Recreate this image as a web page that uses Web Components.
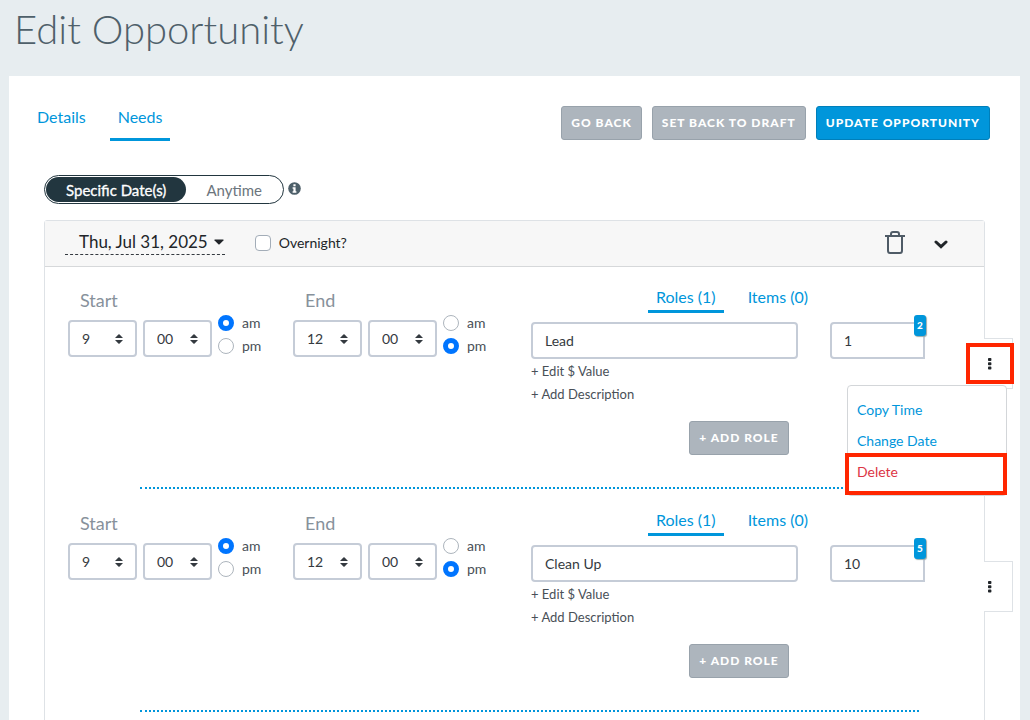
<!DOCTYPE html>
<html lang="en">
<head>
<meta charset="utf-8">
<meta name="viewport" content="width=device-width, initial-scale=1">
<title>Edit Opportunity</title>
<style>
  :root {
    --blue: #0096db;
    --line: #dee2e6;
    --field: #c5ccd7;
    --ink: #212529;
    --slate: #495057;
  }
  body {
    margin: 0;
    min-height: 100vh;
    background: #e7edf0;
    color: var(--ink);
    font: 14px/20px Lato, "Liberation Sans", sans-serif;
  }
</style>
</head>
<body>
<opportunity-page heading="Edit Opportunity">
  <tab-link slot="tabs" href="#details">Details</tab-link>
  <tab-link slot="tabs" href="#needs" active>Needs</tab-link>
  <action-button slot="actions">Go Back</action-button>
  <action-button slot="actions">Set Back to Draft</action-button>
  <action-button slot="actions" primary>Update Opportunity</action-button>
  <schedule-toggle></schedule-toggle>
  <date-card date="Thu, Jul 31, 2025">
    <need-row role-name="Lead" quantity="1" badge="2" menu-open></need-row>
    <need-row role-name="Clean Up" quantity="10" badge="5"></need-row>
  </date-card>
</opportunity-page>

<script>
const reset = `
  *, *::before, *::after { box-sizing: border-box; }
  button, input, select { font: inherit; color: inherit; margin: 0; }
  button { background: none; border: 0; padding: 0; cursor: pointer; }
  a { text-decoration: none; color: inherit; }
  svg { display: block; }
`;

class BaseElement extends HTMLElement {
  connectedCallback() {
    if (this.shadowRoot) return;
    this.attachShadow({ mode: "open" }).innerHTML = this.render();
  }
}

customElements.define("opportunity-page", class extends BaseElement {
  render() {
    return `<style>${reset}
      :host { display: block; }
      h1 { margin: 0; padding: 3px 14px 21px; font-size: 40px; line-height: 52px; font-weight: 300; color: #4f606a; }
      main { background: #fff; margin: 0 10px 0 9px; padding: 30px 35px 40px; }
      .bar { display: flex; justify-content: space-between; align-items: flex-start; margin: 0 -5px 34px -15px; }
      nav { display: flex; gap: 16px; font-size: 16px; --tab-line: 22px; --tab-gap: 10px; }
      .actions { display: flex; gap: 10px; }
    </style>
    <h1>${this.getAttribute("heading")}</h1>
    <main>
      <div class="bar">
        <nav><slot name="tabs"></slot></nav>
        <div class="actions"><slot name="actions"></slot></div>
      </div>
      <slot></slot>
    </main>`;
  }
});

customElements.define("tab-link", class extends BaseElement {
  render() {
    return `<style>${reset}
      :host { display: block; }
      a { display: block; padding: 0 8px var(--tab-gap, 2px); line-height: var(--tab-line, 22px); color: var(--blue); border-bottom: 3px solid transparent; }
      :host([active]) a { border-color: var(--blue); }
    </style>
    <a href="${this.getAttribute("href")}"><slot></slot></a>`;
  }
});

customElements.define("action-button", class extends BaseElement {
  render() {
    return `<style>${reset}
      :host { display: block; }
      button { display: block; height: 34px; padding: 0 9px; border: 1px solid #98a2ab; border-radius: 3px; background: #adb5bd; color: #fff; font-size: 12px; font-weight: 900; letter-spacing: 1px; text-transform: uppercase; white-space: nowrap; }
      :host([primary]) button { background: var(--blue); border-color: #007fba; }
    </style>
    <button type="button"><slot></slot></button>`;
  }
});

customElements.define("schedule-toggle", class extends BaseElement {
  render() {
    return `<style>${reset}
      :host { display: flex; align-items: center; gap: 4px; margin-bottom: 16px; }
      .pill { display: flex; padding: 1px; border: 1px solid #22363f; border-radius: 15px; }
      .pill button { height: 25px; padding: 0 20px; border-radius: 13px; font-size: 15px; color: #6c757d; }
      .pill button[aria-pressed=true] { background: #22363f; color: #fff; -webkit-text-stroke: 0.3px #fff; }
      .info { margin-bottom: 2px; }
    </style>
    <div class="pill" role="group" aria-label="Schedule type">
      <button type="button" aria-pressed="true">Specific Date(s)</button>
      <button type="button" aria-pressed="false">Anytime</button>
    </div>
    <button class="info" type="button" aria-label="About schedule types">
      <svg width="13" height="13" viewBox="0 0 13 13"><circle cx="6.500" cy="6.500" r="6.300" fill="#4d5f69"/><path d="M5.400 2.200h2.200v2H5.400zM4.600 5.200h3v4h.8v1.500H4.600V9.200h.8V6.700h-.8z" fill="#fff"/></svg>
    </button>`;
  }
});

customElements.define("date-card", class extends BaseElement {
  render() {
    return `<style>${reset}
      :host { display: block; border: 1px solid var(--line); border-radius: 3px; padding-bottom: 40px; }
      header { display: flex; align-items: center; height: 46px; padding: 0 36px 2px 20px; background: #f7f7f7; border-bottom: 1px solid #d6d8da; }
      .date { display: flex; align-items: center; gap: 6px; height: 24px; padding: 0 1px 0 14px; margin-right: 30px; border-bottom: 1px dashed #343a40; font-size: 17px; line-height: 22px; }
      label { display: flex; align-items: center; gap: 8px; }
      input { appearance: none; width: 16px; height: 16px; border: 1px solid #a3adb8; border-radius: 4px; background: #fff; }
      input:checked { background: var(--blue); }
      .tools { display: flex; align-items: center; gap: 29px; margin-left: auto; }
      .tools button:last-child { padding-top: 3px; }
    </style>
    <header>
      <button class="date" type="button">${this.getAttribute("date")}
        <svg width="10" height="6" viewBox="0 0 10 6"><path d="M1 .5h8q1 .2.4 1L5.600 5.200q-.6.500-1.200 0L.6 1.500Q0 .7 1 .5z" fill="#212529"/></svg>
      </button>
      <label for="overnight"><input id="overnight" type="checkbox">Overnight?</label>
      <div class="tools">
        <button type="button" aria-label="Delete date"><svg width="20" height="23" viewBox="0 0 20 23" fill="none" stroke="#4f5b66" stroke-width="2"><path d="M0 5h20M6 5V3q0-2 2-2h4q2 0 2 2v2M3 5v14.500Q3 22 5 22h10q2 0 2-2.500V5"/></svg></button>
        <button type="button" aria-label="Collapse"><svg width="14" height="9" viewBox="0 0 14 9"><path d="M2 2l5 4.700L12 2" fill="none" stroke="#212529" stroke-width="3" stroke-linecap="round"/></svg></button>
      </div>
    </header>
    <slot></slot>`;
  }
});

customElements.define("time-field", class extends BaseElement {
  render() {
    const picked = m => this.getAttribute("meridiem") === m ? "checked" : "";
    const pick = (label, value) => `<span class="select"><select aria-label="${label}"><option>${value}</option></select>
      <svg width="8" height="10" viewBox="0 0 8 10"><path d="M0 4L3.400.5q.6-.5 1.200 0L8 4zM0 6l3.400 3.500q.6.500 1.200 0L8 6z" fill="#343a40"/></svg></span>`;
    return `<style>${reset}
      :host { display: block; color: var(--slate); }
      fieldset { border: 0; margin: 0; padding: 0; min-width: 0; }
      legend { padding: 0 12px; font-size: 18px; line-height: 21px; color: #87919b; }
      .fields { display: flex; align-items: flex-end; gap: 6px; }
      .select { position: relative; display: block; width: 69px; }
      select { appearance: none; display: block; width: 100%; height: 37px; padding: 0 12px; border: 2px solid var(--field); border-radius: 4px; background: #fff; color: #343a40; }
      .select svg { position: absolute; right: 14px; top: 14px; pointer-events: none; }
      label { display: flex; align-items: center; gap: 8px; height: 23px; }
      input { appearance: none; width: 16px; height: 16px; border: 1px solid #adb5bd; border-radius: 50%; background: #fff; }
      input:checked { border: 5px solid #0075ff; }
    </style>
    <fieldset>
      <legend>${this.getAttribute("label")}</legend>
      <div class="fields">
        ${pick("Hour", this.getAttribute("hour"))}
        ${pick("Minute", this.getAttribute("minute"))}
        <div>
          <label for="am"><input id="am" type="radio" name="meridiem" ${picked("am")}>am</label>
          <label for="pm"><input id="pm" type="radio" name="meridiem" ${picked("pm")}>pm</label>
        </div>
      </div>
    </fieldset>`;
  }
});

customElements.define("row-menu", class extends BaseElement {
  render() {
    return `<style>${reset}
      :host { display: block; width: 29px; height: 51px; border: 1px solid var(--line); border-left: 0; background: #fff; }
      .toggle { display: flex; align-items: center; width: 100%; height: 100%; padding-left: 4px; }
      .menu { display: none; position: absolute; top: 46px; right: 5px; width: 160px; padding: 8px 9px; border: 1px solid #d3d6d9; border-radius: 4px; background: #fff; }
      :host([open]) .menu { display: block; }
      .menu a { display: block; line-height: 31px; color: var(--blue); }
      .menu a.danger { color: #dc3545; }
      .mark { display: none; position: absolute; border: 4px solid #ff2600; pointer-events: none; }
      :host([open]) .mark { display: block; }
      .on-toggle { top: 4px; right: -2px; width: 48px; height: 41px; }
      .on-delete { top: 114px; right: 5px; width: 162px; height: 42px; }
    </style>
    <button class="toggle" type="button" aria-label="Time options">
      <svg width="4" height="12" viewBox="0 0 4 12" fill="#212529"><rect width="3.400" height="3" rx=".8"/><rect y="4.300" width="3.400" height="3" rx=".8"/><rect y="8.600" width="3.400" height="3" rx=".8"/></svg>
    </button>
    <nav class="menu">
      <a href="#copy">Copy Time</a>
      <a href="#change">Change Date</a>
      <a class="danger" href="#delete">Delete</a>
    </nav>
    <span class="mark on-toggle"></span>
    <span class="mark on-delete"></span>`;
  }
});

customElements.define("need-row", class extends BaseElement {
  render() {
    return `<style>${reset}
      :host { display: block; position: relative; }
      .grid { display: grid; grid-template-columns: 225px 238px minmax(0, 1fr); padding: 19px 59px 32px 23px; }
      time-field { padding-top: 4px; }
      .tabs { display: flex; justify-content: center; gap: 16px; padding-left: 8px; margin-bottom: 9px; font-size: 16px; }
      .inputs { display: grid; grid-template-columns: minmax(0, 1fr) 95px; gap: 32px; }
      .inputs input { display: block; width: 100%; height: 37px; padding: 0 12px; border: 2px solid var(--field); border-radius: 4px; background: #fff; color: #343a40; outline: 0; }
      .quantity { position: relative; }
      .quantity input { border-radius: 4px 0 0 4px; }
      .badge { position: absolute; top: -7px; right: -1px; width: 12px; height: 21px; border-radius: 3px; background: var(--blue); box-shadow: 1px 1px 1px #9aa; color: #fff; font-size: 10px; font-weight: 900; line-height: 21px; text-align: center; }
      .links { display: grid; justify-items: start; padding-top: 1px; margin-bottom: 15px; font-size: 13px; line-height: 23px; color: var(--slate); }
      .add { display: flex; justify-content: center; padding-left: 22px; }
      hr { margin: 0 65px 1px 95px; border: 0; border-top: 2px dotted var(--blue); }
      row-menu { position: absolute; top: 71px; right: -29px; }
    </style>
    <div class="grid">
      <time-field label="Start" hour="9" minute="00" meridiem="am"></time-field>
      <time-field label="End" hour="12" minute="00" meridiem="pm"></time-field>
      <section>
        <div class="tabs">
          <tab-link href="#roles" active>Roles (1)</tab-link>
          <tab-link href="#items">Items (0)</tab-link>
        </div>
        <div class="inputs">
          <input type="text" aria-label="Role" value="${this.getAttribute("role-name")}">
          <div class="quantity">
            <input type="text" inputmode="numeric" aria-label="Quantity" value="${this.getAttribute("quantity")}">
            <span class="badge">${this.getAttribute("badge")}</span>
          </div>
        </div>
        <div class="links">
          <a href="#value">+ Edit $ Value</a>
          <a href="#description">+ Add Description</a>
        </div>
        <div class="add"><action-button>+ Add Role</action-button></div>
      </section>
    </div>
    <hr>
    <row-menu ${this.hasAttribute("menu-open") ? "open" : ""}></row-menu>`;
  }
});
</script>
</body>
</html>
